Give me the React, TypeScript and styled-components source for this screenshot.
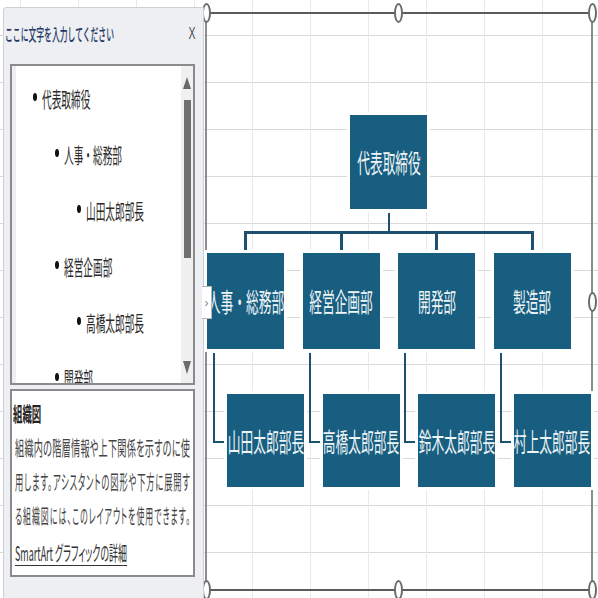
import styled, { createGlobalStyle } from "styled-components"

const GlobalStyle = createGlobalStyle`
  html, body {
    margin: 0;
    padding: 0;
    background: #ffffff;
    overflow: hidden;
  }
  body {
    font-family: "Noto Sans CJK JP", "Noto Sans", sans-serif;
  }
`

type OutlineItem = { text: string; level: number }

const outline: OutlineItem[] = [
    { text: "代表取締役", level: 0 },
    { text: "人事・総務部", level: 1 },
    { text: "山田太郎部長", level: 2 },
    { text: "経営企画部", level: 1 },
    { text: "高橋太郎部長", level: 2 },
    { text: "開発部", level: 1 },
]

const departments = [
    { name: "人事・総務部", head: "山田太郎部長" },
    { name: "経営企画部", head: "高橋太郎部長" },
    { name: "開発部", head: "鈴木太郎部長" },
    { name: "製造部", head: "村上太郎部長" },
]

const descLines = [
    "組織内の階層情報や上下関係を示すのに使",
    "用します。アシスタントの図形や下方に展開す",
    "る組織図には、このレイアウトを使用できます。",
]

const DESC_WIDTH = 175
const DESC_FONT = 20

// selection handles around the SmartArt frame (relative to the frame's inner box)
const handles = [
    { x: -1, y: -1 },
    { x: 191.5, y: -1 },
    { x: 385, y: -1 },
    { x: 385, y: 288 },
    { x: -1, y: 288 },
    { x: -1, y: 576 },
    { x: 191.5, y: 576 },
    { x: 385, y: 576 },
]

export default function App() {
    return (
        <>
            <GlobalStyle />
            <Sheet>
                <SmartArtFrame>
                    <OrgChart>
                        <TopBox>
                            <BoxLabel>代表取締役</BoxLabel>
                        </TopBox>
                        <Stem />
                        <Bar />
                        <DeptRow>
                            {departments.map((d) => (
                                <DeptColumn key={d.name}>
                                    <Stub />
                                    <DeptBox>
                                        <BoxLabel>{d.name}</BoxLabel>
                                    </DeptBox>
                                    <HeadRow>
                                        <Elbow />
                                        <HeadBox>
                                            <BoxLabel>{d.head}</BoxLabel>
                                        </HeadBox>
                                    </HeadRow>
                                </DeptColumn>
                            ))}
                        </DeptRow>
                    </OrgChart>
                    {handles.map((h, i) => (
                        <Handle key={i} $x={h.x} $y={h.y} />
                    ))}
                </SmartArtFrame>

                <TextPane>
                    <PaneHeader>
                        <PaneTitle>
                            <Narrow $size={17} $scale={0.46} $color="#1f3a64" $weight={500}>
                                ここに文字を入力してください
                            </Narrow>
                        </PaneTitle>
                        <Close>X</Close>
                    </PaneHeader>
                    <OutlineBox>
                        <OutlineList>
                            {outline.map((item) => (
                                <OutlineRow key={item.text} $level={item.level}>
                                    <Bullet />
                                    <Narrow $size={21} $scale={0.46} $color="#2a2a2a">
                                        {item.text}
                                    </Narrow>
                                </OutlineRow>
                            ))}
                        </OutlineList>
                        <ScrollBar>
                            <ArrowUp />
                            <Thumb />
                            <ArrowDown />
                        </ScrollBar>
                    </OutlineBox>
                    <DescBox>
                        <DescLine>
                            <Narrow $size={20} $scale={0.47} $color="#222" $weight={700}>
                                組織図
                            </Narrow>
                        </DescLine>
                        {descLines.map((line) => {
                            const w = line.length * DESC_FONT + 2
                            return (
                                <DescLine key={line} $indent={2}>
                                    <DescText $width={w} $scale={DESC_WIDTH / w}>
                                        {line}
                                    </DescText>
                                </DescLine>
                            )
                        })}
                        <DescLink>
                            <Narrow $size={20} $scale={0.45} $color="#333" $palt $underline>
                                SmartArt グラフィックの詳細
                            </Narrow>
                        </DescLink>
                    </DescBox>
                    <CollapseTab>›</CollapseTab>
                </TextPane>
            </Sheet>
        </>
    )
}

const Sheet = styled.div`
    position: relative;
    width: 598px;
    height: 598px;
    overflow: hidden;
    background-color: #ffffff;
    background-image:
        linear-gradient(to right, #e9e9e9 1px, transparent 1px),
        linear-gradient(to bottom, #d9d9d9 1px, transparent 1px);
    background-size: 58px 100%, 100% 47px;
    background-position: 20px 0, 0 35px;
`

const SmartArtFrame = styled.div`
    position: absolute;
    left: 205px;
    top: 12px;
    width: 388px;
    height: 579px;
    box-sizing: border-box;
    border-top: 2px solid #5b5b5b;
    border-bottom: 2px solid #5b5b5b;
    border-left: 2px solid #8c8c8c;
    border-right: 2px solid #8c8c8c;
`

const Handle = styled.div<{ $x: number; $y: number }>`
    position: absolute;
    left: ${(p) => p.$x - 4.5}px;
    top: ${(p) => p.$y - 10}px;
    width: 9px;
    height: 20px;
    box-sizing: border-box;
    border: 2px solid #6a6a6a;
    border-radius: 50%;
    background: #ffffff;
`

const OrgChart = styled.div`
    display: flex;
    flex-direction: column;
    align-items: flex-start;
    padding-top: 101px;
`

const ChartBox = styled.div`
    flex: none;
    width: 77px;
    display: flex;
    align-items: center;
    justify-content: center;
    background: #175e80;
    box-shadow: 0 0 0 3px #ffffff;
    color: #eef4f7;
`

const TopBox = styled(ChartBox)`
    margin-left: 143px;
    height: 94px;
`

const DeptBox = styled(ChartBox)`
    height: 96px;
`

const HeadBox = styled(ChartBox)`
    margin-top: 45px;
    height: 93px;
`

const BoxLabel = styled.span`
    display: inline-block;
    white-space: nowrap;
    font-size: 26px;
    line-height: 1;
    transform: scaleX(0.49);
    transform-origin: center;
`

const Stem = styled.div`
    margin: 4px 0 0 181px;
    width: 2px;
    height: 18px;
    background: #1e5070;
`

const Bar = styled.div`
    margin-left: 37px;
    width: 290px;
    height: 3px;
    background: #1e5070;
`

const DeptRow = styled.div`
    display: flex;
    gap: 18.67px;
`

const DeptColumn = styled.div`
    flex: none;
    width: 77px;
    display: flex;
    flex-direction: column;
    align-items: flex-start;
`

const Stub = styled.div`
    align-self: center;
    width: 3px;
    height: 19px;
    background: #1e5070;
`

const HeadRow = styled.div`
    display: flex;
    align-items: flex-start;
    margin-left: 6px;
`

const Elbow = styled.div`
    flex: none;
    margin-top: 4px;
    width: 14px;
    height: 90px;
    box-sizing: border-box;
    border-left: 2px solid #1e5070;
    border-bottom: 2px solid #1e5070;
`

const TextPane = styled.div`
    position: absolute;
    left: 3px;
    top: 7px;
    width: 201px;
    height: 600px;
    box-sizing: border-box;
    background: #edeff3;
    border: 1px solid #cdd0d6;
    border-radius: 3px 0 0 0;
    display: flex;
    flex-direction: column;
`

const PaneHeader = styled.div`
    height: 56px;
    box-sizing: border-box;
    padding: 17px 5px 0 1px;
    display: flex;
    align-items: flex-start;
`

const PaneTitle = styled.div`
    flex: 1;
    min-width: 0;
    display: flex;
`

const Narrow = styled.span<{
    $size: number
    $scale: number
    $color: string
    $weight?: number
    $palt?: boolean
    $underline?: boolean
}>`
    flex: none;
    display: inline-block;
    white-space: nowrap;
    font-size: ${(p) => p.$size}px;
    line-height: ${(p) => p.$size}px;
    font-weight: ${(p) => p.$weight ?? 400};
    font-feature-settings: ${(p) => (p.$palt ? '"palt"' : "normal")};
    color: ${(p) => p.$color};
    text-decoration: ${(p) => (p.$underline ? "underline" : "none")};
    text-decoration-thickness: 1px;
    text-underline-offset: 4px;
    transform: scaleX(${(p) => p.$scale});
    transform-origin: left center;
`

// body lines are justified to their own width, then squeezed to the pane's 175px
const DescText = styled.span<{ $width: number; $scale: number }>`
    flex: none;
    display: block;
    width: ${(p) => p.$width}px;
    font-size: 20px;
    line-height: 20px;
    color: #444;
    font-feature-settings: "palt";
    text-align: justify;
    text-align-last: justify;
    transform: scaleX(${(p) => p.$scale});
    transform-origin: left center;
`

const Close = styled.span`
    flex: none;
    display: inline-block;
    width: 12px;
    text-align: center;
    font-family: "Liberation Sans", Arial, sans-serif;
    font-size: 17px;
    line-height: 17px;
    color: #505050;
    transform: scaleX(0.62);
`

const OutlineBox = styled.div`
    margin-left: 6px;
    width: 185px;
    height: 321px;
    box-sizing: border-box;
    border: 2px solid #8b8b8b;
    background: #ffffff;
    display: flex;
    overflow: hidden;
`

const OutlineList = styled.div`
    flex: 1;
    min-width: 0;
    border-left: 4px solid #efefef;
    padding-top: 4px;
    overflow: hidden;
`

const OutlineRow = styled.div<{ $level: number }>`
    height: 56px;
    display: flex;
    align-items: center;
    gap: 5px;
    padding-left: ${(p) => 17 + p.$level * 22}px;
`

const Bullet = styled.span`
    flex: none;
    width: 4px;
    height: 8px;
    margin-top: -3px;
    border-radius: 50%;
    background: #111111;
`

const ScrollBar = styled.div`
    flex: none;
    width: 12px;
    background: #f0f0f0;
    display: flex;
    flex-direction: column;
    align-items: center;
    padding: 11px 0 9px;
    box-sizing: border-box;
`

const ArrowUp = styled.div`
    width: 0;
    height: 0;
    border-left: 4px solid transparent;
    border-right: 4px solid transparent;
    border-bottom: 12px solid #6a6a6a;
`

const ArrowDown = styled.div`
    margin-top: auto;
    width: 0;
    height: 0;
    border-left: 4px solid transparent;
    border-right: 4px solid transparent;
    border-top: 13px solid #6a6a6a;
`

const Thumb = styled.div`
    margin-top: 11px;
    width: 7px;
    height: 158px;
    background: #707070;
`

const DescBox = styled.div`
    margin: 4px 0 0 6px;
    width: 185px;
    height: 188px;
    box-sizing: border-box;
    border: 2px solid #8b8b8b;
    background: #ffffff;
    padding: 6px 0 0 1px;
    display: flex;
    flex-direction: column;
    overflow: hidden;
`

const DescLine = styled.div<{ $indent?: number }>`
    height: 34px;
    display: flex;
    align-items: center;
    padding-left: ${(p) => p.$indent ?? 0}px;
`

const DescLink = styled.a`
    margin-top: 3px;
    height: 34px;
    display: flex;
    align-items: center;
    padding-left: 2px;
    text-decoration: none;
    cursor: pointer;
`

const CollapseTab = styled.div`
    position: absolute;
    left: 198px;
    top: 278px;
    width: 10px;
    height: 33px;
    box-sizing: border-box;
    border: 1px solid #b5b5b5;
    border-left: none;
    background: #ffffff;
    display: flex;
    align-items: center;
    justify-content: center;
    font-family: "Liberation Sans", Arial, sans-serif;
    font-size: 12px;
    color: #888;
`
